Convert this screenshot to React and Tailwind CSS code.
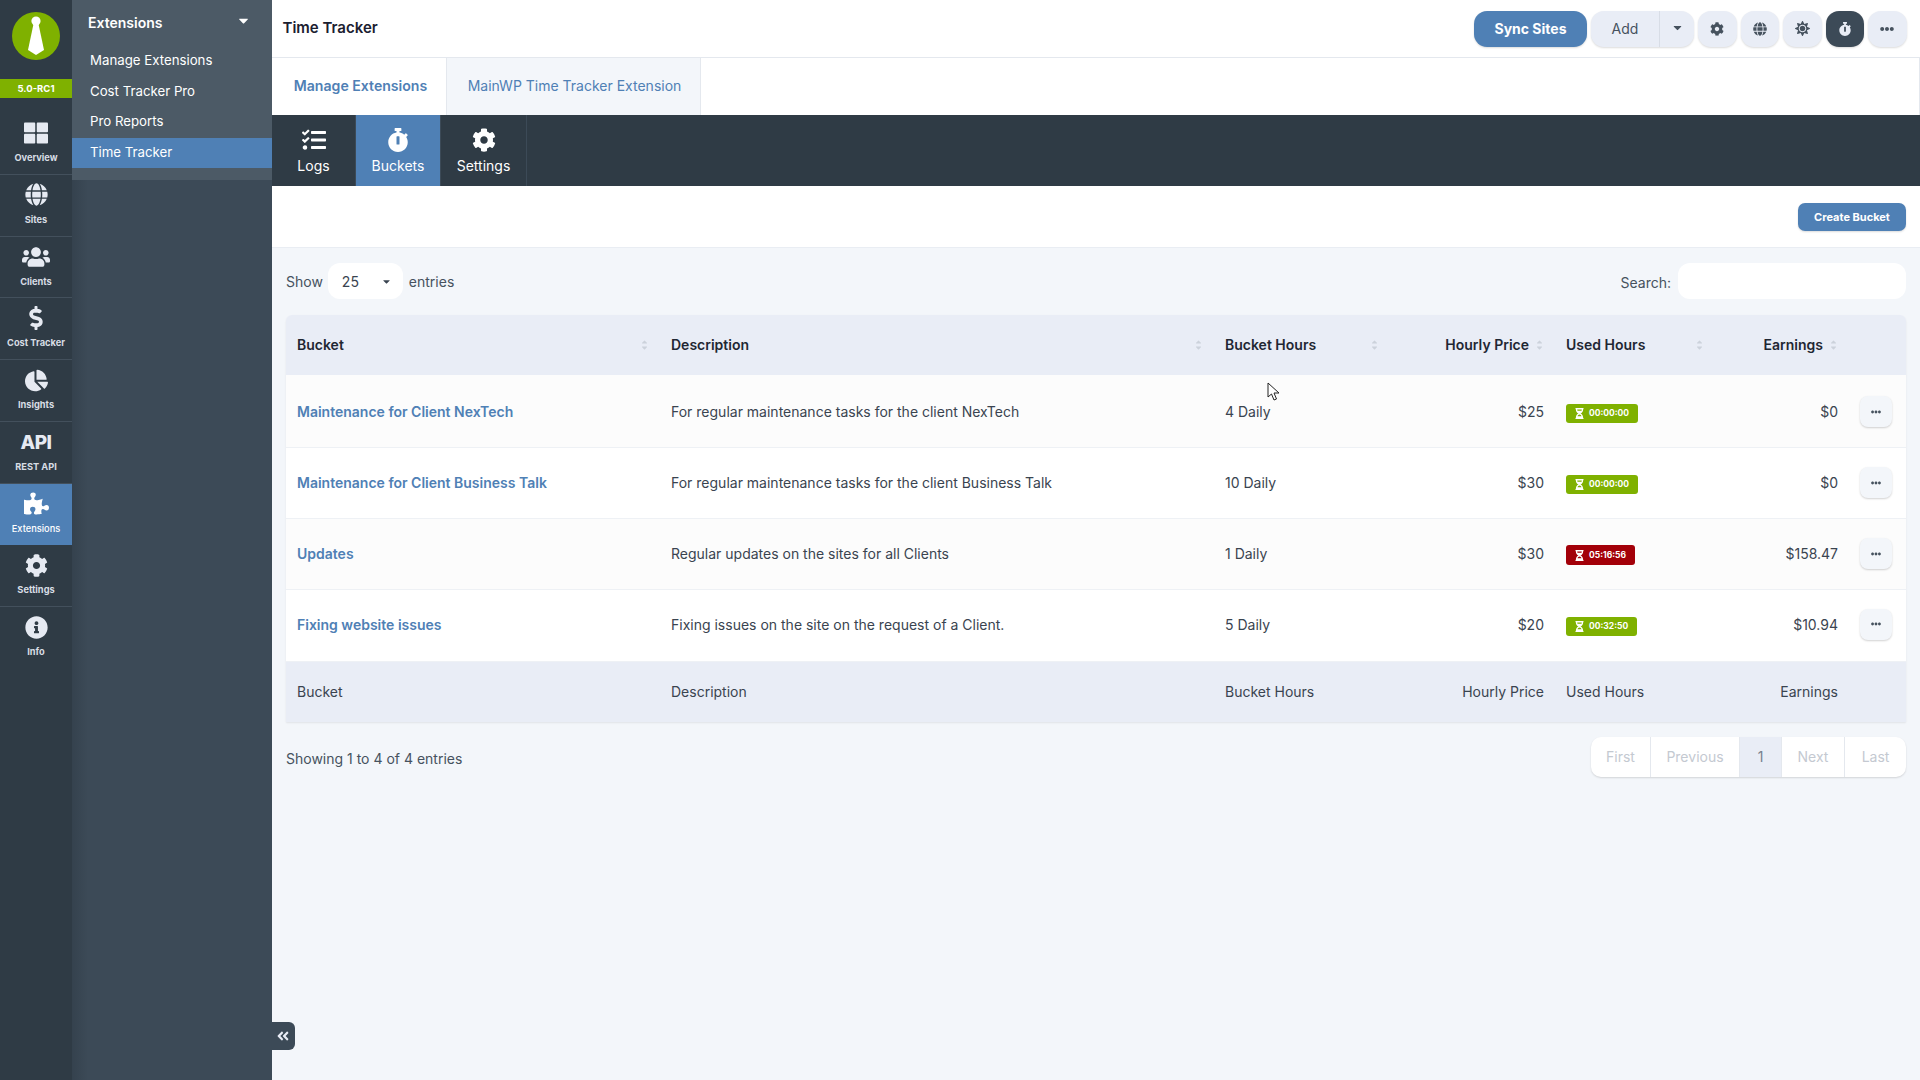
import React from "react";
import {
  FaThLarge, FaGlobe, FaUsers, FaDollarSign, FaChartPie, FaPuzzlePiece, FaCog, FaInfoCircle,
  FaTasks, FaStopwatch, FaSun, FaEllipsisH, FaHourglassHalf, FaAngleDoubleLeft, FaCaretDown, FaSortUp, FaSortDown,
} from "react-icons/fa";

function Logo() {
  return (
    <svg width="48" height="48" viewBox="0 0 48 48">
      <circle cx="24" cy="24" r="24" fill="#7fb100" />
      <circle cx="24" cy="9" r="4.6" fill="#fff" />
      <polygon points="21.5,12 26.5,12 32,38 24,43 16,38" fill="#fff" />
    </svg>
  );
}

const mainNav = [
  { label: "Overview", Icon: FaThLarge, size: 24 },
  { label: "Sites", Icon: FaGlobe, size: 23 },
  { label: "Clients", Icon: FaUsers, size: 28 },
  { label: "Cost Tracker", Icon: FaDollarSign, size: 24 },
  { label: "Insights", Icon: FaChartPie, size: 23 },
  { label: "REST API", api: true },
  { label: "Extensions", Icon: FaPuzzlePiece, size: 25, active: true },
  { label: "Settings", Icon: FaCog, size: 23 },
  { label: "Info", Icon: FaInfoCircle, size: 23 },
];

function MainNavItem({ item }) {
  const { label, Icon, size, api, active } = item;
  return (
    <a className={`flex h-[61.75px] flex-col items-center border-b pt-[5px] ${active ? "border-[#4f80b5] bg-[#4f80b5] text-white" : "border-[#43505c] text-[#e6eaf2]"} ${label === "Info" ? "border-b-0" : ""}`}>
      <span className="flex h-[30px] items-center justify-center">
        {api ? <span className="mt-[2px] text-[19px] leading-none font-extrabold tracking-[-0.5px]">API</span> : <Icon size={size} />}
      </span>
      <span className={`mt-[3px] text-[9.25px] leading-[14px] ${active ? "font-medium" : "font-bold text-[#d8dde4]"}`}>{label}</span>
    </a>
  );
}

function IconButton({ Icon, dark, size = 14 }) {
  return (
    <button className={`flex h-[36px] w-[38.5px] items-center justify-center rounded-[13px] shadow-[0_1px_2px_rgba(0,0,0,0.14)] ${dark ? "bg-[#3c4a57] text-[#e9edf6]" : "bg-[#e9edf6] text-[#46525e]"}`}>
      <Icon size={size} />
    </button>
  );
}

function TopBar() {
  return (
    <header className="flex h-[57px] items-center justify-between pl-[10.5px] pr-[13.5px]">
      <h1 className="text-[15px] font-semibold text-[#1b2030]">Time Tracker</h1>
      <div className="flex items-center gap-[4px]">
        <button className="h-[36px] w-[113px] rounded-[13px] bg-[#4f80b5] text-[14px] font-bold text-white shadow-[0_1px_2px_rgba(0,0,0,0.14)]">Sync Sites</button>
        <div className="flex h-[36px] w-[103px] overflow-hidden rounded-[13px] bg-[#e9edf6] text-[#46525e] shadow-[0_1px_2px_rgba(0,0,0,0.14)]">
          <span className="flex w-[69px] items-center justify-center border-r border-[#d8dde6] pb-[1px] text-[14px]">Add</span>
          <span className="flex flex-1 items-center justify-center pb-[2px]"><FaCaretDown size={13} /></span>
        </div>
        <IconButton Icon={FaCog} />
        <IconButton Icon={FaGlobe} />
        <IconButton Icon={FaSun} size={15} />
        <IconButton Icon={FaStopwatch} dark />
        <IconButton Icon={FaEllipsisH} />
      </div>
    </header>
  );
}

function Tabs() {
  return (
    <nav className="flex h-[58px] border-t border-r border-[#e4e8ee] bg-white text-[14px]">
      <a className="flex w-[175px] items-center justify-center border-r border-[#e4e8ee] pb-[2px] pl-[3px] text-[14.1px] font-semibold text-[#4f80b5]">Manage Extensions</a>
      <a className="flex w-[254px] items-center justify-center border-r border-[#e4e8ee] bg-[#f3f6fa] pb-[2px] pl-[2px] text-[#4f80b5]">MainWP Time Tracker Extension</a>
    </nav>
  );
}

function SubNavItem({ label, Icon, active, width }) {
  return (
    <a className={`flex flex-col items-center justify-center border-r border-[#3c4a57] text-white ${width} ${active ? "bg-[#4f80b5]" : ""}`}>
      <Icon size={24} />
      <span className="mt-[5px] text-[14px] leading-[17px]">{label}</span>
    </a>
  );
}

function SortArrows() {
  return (
    <span className="absolute top-1/2 right-[11px] flex -translate-y-1/2 flex-col text-[#ccd2db]">
      <FaSortUp size={9} className="-mb-[7px]" />
      <FaSortDown size={9} />
    </span>
  );
}

const rows = [
  { name: "Maintenance for Client NexTech", desc: "For regular maintenance tasks for the client NexTech", hours: "4 Daily", price: "$25", used: "00:00:00", earn: "$0", h: "h-[72px]", pad: "pt-[2px]" },
  { name: "Maintenance for Client Business Talk", desc: "For regular maintenance tasks for the client Business Talk", hours: "10 Daily", price: "$30", used: "00:00:00", earn: "$0", h: "h-[71px]", pad: "" },
  { name: "Updates", desc: "Regular updates on the sites for all Clients", hours: "1 Daily", price: "$30", used: "05:16:56", earn: "$158.47", red: true, h: "h-[71px]", pad: "" },
  { name: "Fixing website issues", desc: "Fixing issues on the site on the request of a Client.", hours: "5 Daily", price: "$20", used: "00:32:50", earn: "$10.94", h: "h-[72px]", pad: "pb-[2px]" },
];

function BucketTable() {
  const th = "relative px-[11px] pb-[2px] text-left font-semibold";
  const td = "px-[11px]";
  return (
    <table className="w-full table-fixed border-collapse rounded-t-[6px] text-[14px] text-[#3a4450] shadow-[0_1px_2px_rgba(0,0,0,0.08)]">
      <colgroup>
        <col className="w-[374px]" />
        <col className="w-[554px]" />
        <col className="w-[176px]" />
        <col className="w-[165px]" />
        <col className="w-[160px]" />
        <col className="w-[134px]" />
        <col className="w-[57px]" />
      </colgroup>
      <thead>
        <tr className="h-[60px] bg-[#e9edf6] text-[#1f2733]">
          <th className={`${th} rounded-tl-[6px]`}>Bucket<SortArrows /></th>
          <th className={th}>Description<SortArrows /></th>
          <th className={th}>Bucket Hours<SortArrows /></th>
          <th className={`${th} pr-[26px] text-right`}>Hourly Price<SortArrows /></th>
          <th className={th}>Used Hours<SortArrows /></th>
          <th className={`${th} pr-[26px] text-right`}>Earnings<SortArrows /></th>
          <th className={`${th} rounded-tr-[6px]`}></th>
        </tr>
      </thead>
      <tbody>
        {rows.map((r, i) => (
          <tr key={r.name} className={`border-b border-[#eef1f5] ${r.h} ${i % 2 === 0 ? "bg-[#fcfcfc]" : "bg-white"}`}>
            <td className={`${td} ${r.pad} font-semibold text-[#4f80b5]`}>{r.name}</td>
            <td className={`${td} ${r.pad}`}>{r.desc}</td>
            <td className={`${td} ${r.pad}`}>{r.hours}</td>
            <td className={`${td} ${r.pad} text-right`}>{r.price}</td>
            <td className={`${td} ${r.pad}`}>
              <span className={`mt-[3px] inline-flex items-center gap-[4px] rounded-[3px] pr-[9px] pl-[8px] align-middle text-[8.5px] font-bold text-white ${r.red ? "h-[20px] bg-[#a30009]" : "h-[19px] bg-[#7fb100]"}`}>
                <FaHourglassHalf size={11} />
                {r.used}
              </span>
            </td>
            <td className={`${td} ${r.pad} text-right`}>{r.earn}</td>
            <td className={`${td} ${r.pad}`}>
              <button className="flex h-[31px] w-[32px] items-center justify-center rounded-[8px] bg-[#f3f6fa] text-[#46525e] shadow-[0_1px_2px_rgba(0,0,0,0.18)]">
                <FaEllipsisH size={10} />
              </button>
            </td>
          </tr>
        ))}
      </tbody>
      <tfoot>
        <tr className="h-[61px] bg-[#e9edf6]">
          <td className={td}>Bucket</td>
          <td className={td}>Description</td>
          <td className={td}>Bucket Hours</td>
          <td className={`${td} text-right`}>Hourly Price</td>
          <td className={td}>Used Hours</td>
          <td className={`${td} text-right`}>Earnings</td>
          <td className={td}></td>
        </tr>
      </tfoot>
    </table>
  );
}

function Pagination() {
  const items = [
    { label: "First", w: "w-[60px]" },
    { label: "Previous", w: "w-[89px]" },
    { label: "1", w: "w-[42px]", current: true },
    { label: "Next", w: "w-[63px]" },
    { label: "Last", w: "w-[61px]", last: true },
  ];
  return (
    <div className="flex h-[40px] overflow-hidden rounded-[10px] bg-white text-[14px] text-[#c4c9d1] shadow-[0_1px_2px_rgba(0,0,0,0.14)]">
      {items.map((it) => (
        <span key={it.label} className={`flex items-center justify-center pb-[1px] ${it.w} ${it.last ? "" : "border-r border-[#e4e8ee]"} ${it.current ? "bg-[#e9edf6] text-[#77818d]" : ""}`}>{it.label}</span>
      ))}
    </div>
  );
}

export default function App() {
  return (
    <div className="relative flex h-[1080px] w-[1920px] overflow-hidden bg-[#f3f6fa] font-['Inter',sans-serif]">
      <aside className="flex w-[72px] shrink-0 flex-col bg-[#2f3b45]">
        <div className="flex h-[79px] justify-center pt-[12px]"><Logo /></div>
        <div className="flex h-[19px] items-center justify-center bg-[#7fb100] pt-[1px] text-[9.5px] font-bold text-white">5.0-RC1</div>
        <nav className="mt-[15px] flex flex-col">
          {mainNav.map((item) => <MainNavItem key={item.label} item={item} />)}
        </nav>
      </aside>

      <aside className="w-[200px] shrink-0 bg-[linear-gradient(90deg,#35424e,#3c4a57_16px)]">
        <div className="h-[180px] bg-[#4c5a66] text-[14px] text-white">
          <div className="flex h-[46px] items-center justify-between pr-[21px] pb-[2px] pl-[16px] font-semibold">
            <span>Extensions</span>
            <FaCaretDown size={15} className="-mt-[4px]" />
          </div>
          <div className="flex flex-col text-[13.25px]">
            {["Manage Extensions", "Cost Tracker Pro", "Pro Reports", "Time Tracker"].map((m) => (
              <a key={m} className={`flex h-[30.5px] items-center pl-[18px] ${m === "Time Tracker" ? "bg-[#4f80b5]" : ""}`}>{m}</a>
            ))}
          </div>
        </div>
      </aside>

      <main className="min-w-0 flex-1">
        <div className="bg-white"><TopBar /></div>
        <Tabs />
        <div className="flex h-[71px] bg-[#2f3b45]">
          <SubNavItem label="Logs" Icon={FaTasks} width="w-[84px]" />
          <SubNavItem label="Buckets" Icon={FaStopwatch} width="w-[85px]" active />
          <SubNavItem label="Settings" Icon={FaCog} width="w-[86px]" />
        </div>
        <div className="flex h-[62px] items-center justify-end border-b border-[#e9edf3] bg-white pt-[1px] pr-[14px]">
          <button className="h-[28px] w-[108px] rounded-[7px] bg-[#4f80b5] text-[11px] font-bold text-white shadow-[0_1px_2px_rgba(0,0,0,0.14)]">Create Bucket</button>
        </div>
        <div className="px-[14px] text-[14px] text-[#46525e]">
          <div className="flex h-[67px] items-center justify-between pb-[1px]">
            <div className="flex items-center gap-[5px]">
              <span>Show</span>
              <span className="mr-[1px] flex h-[36px] w-[75px] items-center justify-between rounded-[12px] bg-white pr-[11px] pl-[14px] text-[#3a4450]">
                25 <FaCaretDown size={11} />
              </span>
              <span>entries</span>
            </div>
            <div className="flex items-center gap-[7px]">
              <span className="pt-[2px]">Search:</span>
              <input className="h-[36px] w-[228px] rounded-[12px] bg-white" />
            </div>
          </div>
          <BucketTable />
          <div className="flex items-center justify-between pt-[15px]">
            <span className="pt-[3px]">Showing 1 to 4 of 4 entries</span>
            <Pagination />
          </div>
        </div>
      </main>

      <button className="absolute top-[1022px] left-[272px] flex h-[28px] w-[23px] items-center justify-center rounded-r-[6px] bg-[#3c4a57] pr-[2px] text-[#e9edf6]">
        <FaAngleDoubleLeft size={14} />
      </button>
      <svg className="absolute top-[382px] left-[1267px]" width="13" height="20" viewBox="0 0 13 20">
        <path d="M1 1 L1 15 L4.5 12 L7 18 L9.5 17 L7 11 L12 11 Z" fill="#fff" stroke="#222" strokeWidth="1" />
      </svg>
    </div>
  );
}
